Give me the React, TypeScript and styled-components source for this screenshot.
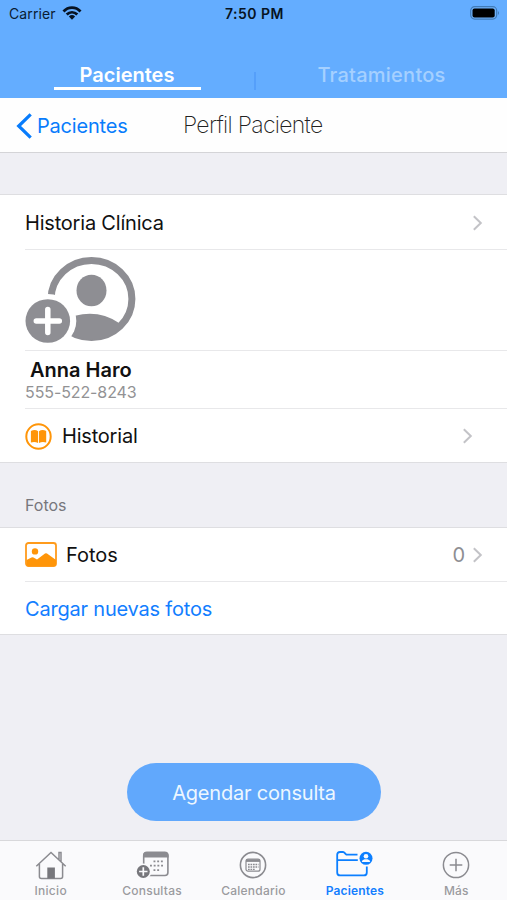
import React from 'react';
import styled, { createGlobalStyle } from 'styled-components';

const Global = createGlobalStyle`
  * { box-sizing: border-box; }
  body { margin: 0; background: #efeff4; font-family: Inter, "Liberation Sans", sans-serif; }
  svg { display: block; flex: none; }
`;

const Screen = styled.div`
  width: 507px;
  height: 900px;
  display: flex;
  flex-direction: column;
  overflow: hidden;
  background: #efeff4;
  color: #111;
`;

const Label = styled.span<{ $size: number; $track?: number; $weight?: number; $color?: string }>`
  font-size: ${p => p.$size}px;
  letter-spacing: ${p => p.$track ?? 0}px;
  font-weight: ${p => p.$weight ?? 400};
  color: ${p => p.$color ?? '#111'};
  line-height: 1.2;
  white-space: nowrap;
`;

const Header = styled.header`
  height: 98px;
  flex: none;
  background: #64adff;
`;

const StatusBar = styled.div`
  height: 28px;
  padding: 0 7px 0 9px;
  display: grid;
  grid-template-columns: 1fr auto 1fr;
  align-items: center;
`;

const Carrier = styled.div`
  display: flex;
  align-items: center;
  gap: 6px;
`;

const Battery = styled.div`
  justify-self: end;
  margin-top: -2px;
`;

const Tabs = styled.div`
  height: 70px;
  display: grid;
  grid-template-columns: 254px 2px 251px;
  align-items: end;
  justify-items: center;
`;

const Tab = styled.div<{ $active?: boolean }>`
  width: 147px;
  height: 29px;
  margin-bottom: 8px;
  display: flex;
  justify-content: center;
  padding-top: 2px;
  border-bottom: 3px solid ${p => (p.$active ? '#fff' : 'transparent')};
`;

const Divider = styled.div`
  width: 2px;
  height: 18px;
  margin-bottom: 8px;
  background: #559ffa;
`;

const NavBar = styled.nav`
  height: 55px;
  flex: none;
  background: #fefefe;
  border-bottom: 1px solid #d4d4d7;
  padding: 1px 0 0 16px;
  display: flex;
  align-items: center;
`;

const Back = styled.div`
  width: 167px;
  display: flex;
  align-items: center;
  gap: 4px;
`;

const Section = styled.section`
  background: #fff;
  border-top: 1px solid #dedee1;
  border-bottom: 1px solid #dedee1;
  flex: none;
`;

const Row = styled.div<{ $h: number; $line?: boolean; $right?: number; $top?: number }>`
  height: ${p => p.$h}px;
  margin-left: 25px;
  padding-top: ${p => p.$top ?? 0}px;
  padding-right: ${p => p.$right ?? 24}px;
  border-bottom: ${p => (p.$line ? '1px solid #e8e8ea' : '0')};
  display: flex;
  align-items: center;
`;

const Push = styled.div`
  margin-left: auto;
  display: flex;
  align-items: center;
  gap: 8px;
`;

const IconSlot = styled.div<{ $w: number }>`
  width: ${p => p.$w}px;
`;

const Person = styled.div`
  display: flex;
  flex-direction: column;
  padding-top: 1px;
`;

const Name = styled.div`
  padding-left: 5px;
  line-height: 24px;
`;

const Spacer = styled.div<{ $h: number }>`
  height: ${p => p.$h}px;
  flex: none;
`;

const SectionTitle = styled.div`
  height: 64px;
  flex: none;
  padding: 32px 0 0 25px;
`;

const Action = styled.div`
  flex: 1;
  display: flex;
  justify-content: center;
  align-items: flex-end;
  padding-bottom: 19px;
`;

const Button = styled.button`
  width: 254px;
  height: 58px;
  border: 0;
  border-radius: 29px;
  background: #61a8fc;
  font-family: inherit;
  display: flex;
  align-items: center;
  justify-content: center;
  padding: 1px 0 0 1px;
`;

const TabBar = styled.footer`
  height: 60px;
  flex: none;
  background: #fafafc;
  border-top: 1px solid #d8d8db;
  display: grid;
  grid-template-columns: repeat(5, 1fr);
`;

const TabItem = styled.div`
  display: flex;
  flex-direction: column;
  align-items: center;
  padding-top: 10px;
  gap: 3px;
`;

const Chevron = () => (
  <svg width="10" height="16" viewBox="0 0 10 16" fill="none" stroke="#c3c3c7" strokeWidth="2">
    <path d="M.8 1.2 7.8 8 .8 14.8" />
  </svg>
);

const Wifi = () => (
  <svg width="20" height="16" viewBox="0 0 20 16" fill="none" stroke="#071323" strokeWidth="2.8">
    <path d="M1.5 5.5C6.2.4 13.8.4 18.5 5.5M4.7 8.6C7.8 5.5 12.2 5.5 15.3 8.6" />
    <path d="M6.9 10.4Q10 7.8 13.1 10.4L10 13.7Z" fill="#071323" stroke="none" />
  </svg>
);

const BatteryIcon = () => (
  <svg width="30" height="14" viewBox="0 0 30 14">
    <rect x=".7" y=".7" width="26" height="12.4" rx="4" fill="#70b2fa" stroke="#407bb8" strokeWidth="1.2" />
    <rect x="2.5" y="2.6" width="22.2" height="8.8" rx="2" fill="#000" />
    <path d="M28 5q2 2 0 4Z" fill="#407bb8" />
  </svg>
);

const BackIcon = () => (
  <svg width="17" height="26" viewBox="0 0 17 26" fill="none" stroke="#087cfc" strokeWidth="3.2">
    <path d="M14.7 1.4 2.7 13l12 11.6" />
  </svg>
);

const Avatar = () => (
  <svg width="111" height="90" viewBox="0 0 111 90">
    <defs>
      <clipPath id="disc"><ellipse cx="66.5" cy="44" rx="42" ry="40.5" /></clipPath>
    </defs>
    <ellipse cx="66.5" cy="44" rx="40.4" ry="38.6" fill="#fff" stroke="#8e8e93" strokeWidth="7" />
    <ellipse cx="66.5" cy="35.5" rx="15" ry="15.8" fill="#8e8e93" />
    <path d="M50 60.8Q74 54.5 94 68L94 88H45Z" fill="#8e8e93" clipPath="url(#disc)" />
    <ellipse cx="22.8" cy="66" rx="28.5" ry="27" fill="#fff" />
    <ellipse cx="22.8" cy="66" rx="22.3" ry="21.8" fill="#8e8e93" />
    <path d="M22.8 54.5v23M11.3 66h23" stroke="#fff" strokeWidth="5.5" strokeLinecap="round" />
  </svg>
);

const Book = () => (
  <svg width="27" height="27" viewBox="0 0 27 27">
    <circle cx="13.5" cy="13.5" r="12.2" fill="none" stroke="#ff9508" strokeWidth="2" />
    <path d="M5.9 8Q10 6 13.1 8.2V20Q9.5 18 5.9 19.6ZM14 8.2Q17.2 6 21.2 8V19.6Q17.5 18 14 20Z" fill="#ff9508" />
  </svg>
);

const Photo = () => (
  <svg width="32" height="25" viewBox="0 0 32 25">
    <rect x="1" y="1" width="30" height="23" rx="2.5" fill="#fff" stroke="#ff9b1c" strokeWidth="1.8" />
    <circle cx="10" cy="9.4" r="3.2" fill="#ff9508" />
    <path d="M1.5 18 6.5 15.5q1-.6 2 0l3.5 2 8-6q1-.7 2 0l9 6.5v4q0 2-2 2h-25.500q-2 0-2-2Z" fill="#ff9508" />
  </svg>
);

const Home = () => (
  <svg width="32" height="30" viewBox="0 0 32 30" fill="none" stroke="#8b8b90" strokeWidth="1.5">
    <path d="M1.3 15.3 16 1.5l14.7 13.8M4.4 13v12.500q0 2 2 2h19.200q2 0 2-2V13M24 8.500V1.500h2v9" />
    <path d="M12.300 16.500h7.600V27.500h-7.600z" fill="#77777c" stroke="none" />
  </svg>
);

const Consult = () => (
  <svg width="33" height="30" viewBox="0 0 33 30">
    <rect x="7.700" y="1.700" width="24.200" height="22.800" rx="3" fill="#fafafc" stroke="#8b8b90" strokeWidth="1.600" />
    <path d="M7 6.500V4.500q0-4 4-4h17.600q4 0 4 4v2Z" fill="#8b8b90" />
    <path d="M17.500 10.300h10M14 14.700h14M17.500 19.200h6.500" stroke="#8b8b90" strokeWidth="1.800" strokeDasharray="1.900 1.800" />
    <circle cx="7.300" cy="20.500" r="8" fill="#fafafc" />
    <circle cx="7.300" cy="20.500" r="6.500" fill="#77777c" />
    <path d="M7.300 16.300v8.400M3.100 20.500h8.400" stroke="#fafafc" strokeWidth="1.700" />
  </svg>
);

const Calendar = () => (
  <svg width="28" height="30" viewBox="0 0 28 30" fill="none" stroke="#8b8b90">
    <circle cx="14" cy="14" r="12.600" strokeWidth="1.600" />
    <rect x="7" y="8.200" width="14" height="12" rx="2" strokeWidth="1.200" />
    <path d="M7 9.600h14" strokeWidth="2.600" />
    <path d="M9 13.500h10.500M9 16h10.500M9 18.400h7" strokeDasharray="1.700 .8" strokeWidth="1.400" />
  </svg>
);

const Patients = () => (
  <svg width="37" height="30" viewBox="0 0 37 30" fill="none" stroke="#0c7fff" strokeWidth="1.800">
    <path d="M21.500 3.700h-10q-1.200 0-2-.900L8.400 1.600Q7.700 1 6.800 1H4Q1.200 1 1.200 3.800v17.600q0 3 3 3h23.600q3 0 3-3V15.500M1.200 9.200h20.600" />
    <circle cx="30" cy="7.300" r="6.500" fill="#0c7fff" stroke="none" />
    <circle cx="30" cy="5.200" r="2.300" fill="#fafafc" stroke="none" />
    <path d="M25.800 11q0-2.300 2.700-2.700h3q2.700.4 2.700 2.700Z" fill="#fafafc" stroke="none" />
  </svg>
);

const More = () => (
  <svg width="28" height="30" viewBox="0 0 28 30" fill="none" stroke="#8b8b90" strokeWidth="1.500">
    <circle cx="14" cy="14" r="12.600" />
    <path d="M14 7.700v12.600M7.700 14h12.600" />
  </svg>
);

const items = [
  { label: 'Inicio', Icon: Home, track: 0.3 },
  { label: 'Consultas', Icon: Consult, track: 0.25 },
  { label: 'Calendario', Icon: Calendar, track: 0.25 },
  { label: 'Pacientes', Icon: Patients, track: 0.15, active: true },
  { label: 'Más', Icon: More, track: 0.1 },
];

export default function App() {
  return (
    <>
      <Global />
      <Screen>
        <Header>
          <StatusBar>
            <Carrier>
              <Label $size={14} $track={0.1} $color="#0a1c33">Carrier</Label>
              <Wifi />
            </Carrier>
            <Label $size={14} $weight={600} $track={0.5} $color="#071323">7:50 PM</Label>
            <Battery><BatteryIcon /></Battery>
          </StatusBar>
          <Tabs>
            <Tab $active><Label $size={20} $weight={600} $track={0} $color="#fff">Pacientes</Label></Tab>
            <Divider />
            <Tab><Label $size={20} $weight={500} $track={0.25} $color="#a5d0ff">Tratamientos</Label></Tab>
          </Tabs>
        </Header>
        <NavBar>
          <Back>
            <BackIcon />
            <Label $size={20} $track={-0.2} $color="#087cfc">Pacientes</Label>
          </Back>
          <Label $size={23} $weight={200} $track={-0.7} $color="#222">Perfil Paciente</Label>
        </NavBar>
        <Spacer $h={41} />
        <Section>
          <Row $h={55} $line $top={1}>
            <Label $size={20} $track={-0.2}>Historia Clínica</Label>
            <Push><Chevron /></Push>
          </Row>
          <Row $h={101} $line><Avatar /></Row>
          <Row $h={58} $line>
            <Person>
              <Name><Label $size={20} $weight={600} $track={0}>Anna Haro</Label></Name>
              <Label $size={16} $track={-0.1} $color="#929294">555-522-8243</Label>
            </Person>
          </Row>
          <Row $h={53} $right={34} $top={1}>
            <IconSlot $w={37}><Book /></IconSlot>
            <Label $size={20} $track={-0.2}>Historial</Label>
            <Push><Chevron /></Push>
          </Row>
        </Section>
        <SectionTitle><Label $size={16} $color="#77777c">Fotos</Label></SectionTitle>
        <Section>
          <Row $h={54} $line>
            <IconSlot $w={41}><Photo /></IconSlot>
            <Label $size={20} $track={0}>Fotos</Label>
            <Push>
              <Label $size={20} $color="#8e8e93">0</Label>
              <Chevron />
            </Push>
          </Row>
          <Row $h={52} $top={2}>
            <Label $size={20} $track={-0.2} $color="#137eff">Cargar nuevas fotos</Label>
          </Row>
        </Section>
        <Action>
          <Button><Label $size={20} $track={-0.2} $color="#edf7ff">Agendar consulta</Label></Button>
        </Action>
        <TabBar>
          {items.map(({ label, Icon, track, active }) => (
            <TabItem key={label}>
              <Icon />
              <Label $size={12} $track={track} $weight={active ? 600 : 500} $color={active ? '#137eff' : '#9b9b9f'}>{label}</Label>
            </TabItem>
          ))}
        </TabBar>
      </Screen>
    </>
  );
}
